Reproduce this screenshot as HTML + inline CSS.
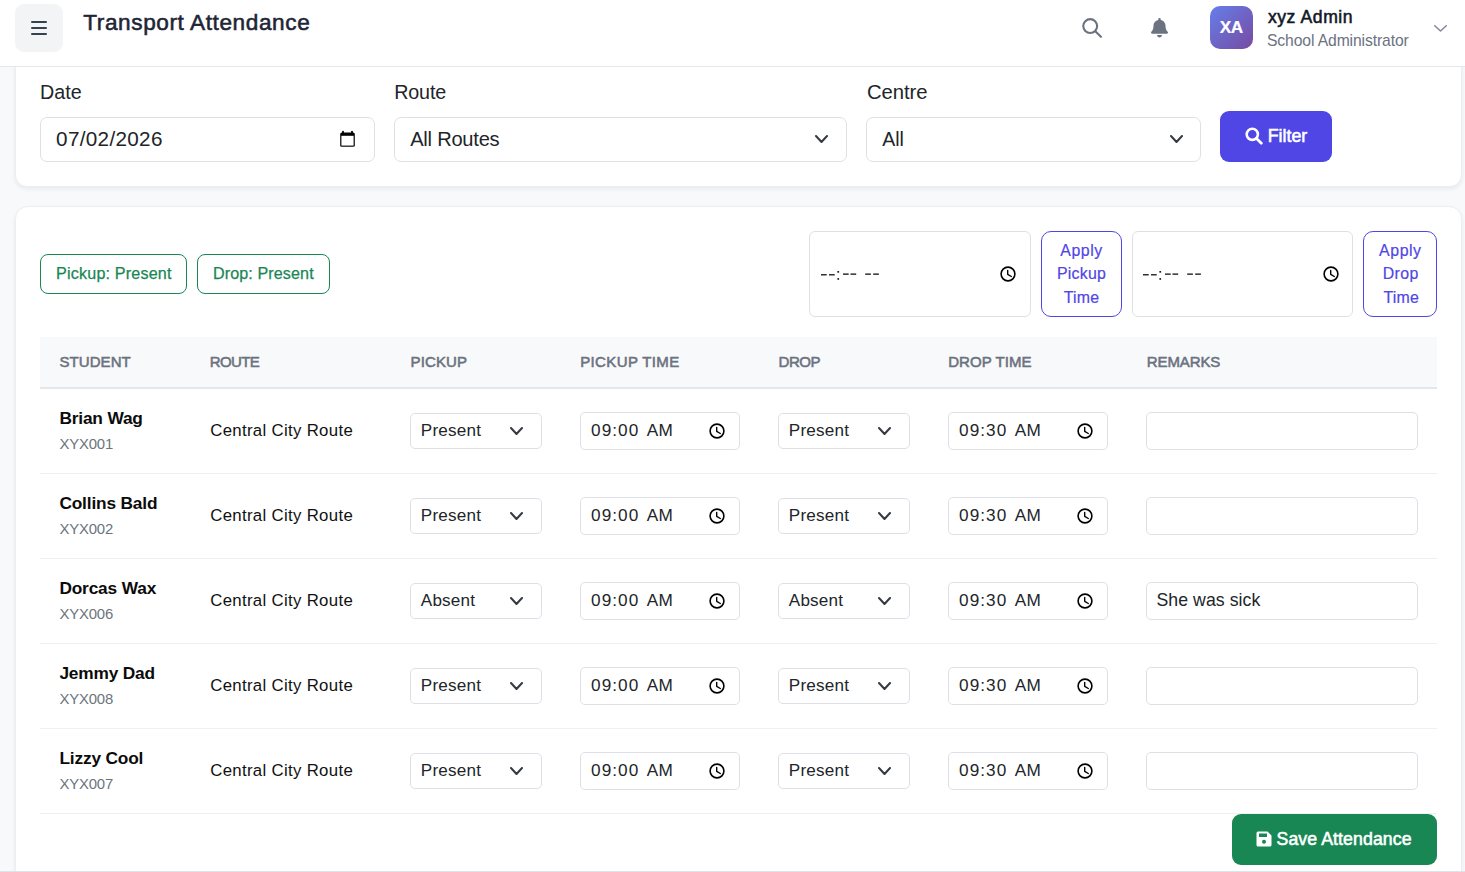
<!DOCTYPE html>
<html><head><meta charset="utf-8"><title>Transport Attendance</title>
<style>
html,body{margin:0;padding:0;}
body{width:1465px;height:872px;overflow:hidden;position:relative;background:#f8f9fb;font-family:"Liberation Sans",sans-serif;}
.t{position:absolute;white-space:nowrap;line-height:1;}
.b{position:absolute;box-sizing:border-box;}
</style></head><body>
<div class="b" style="left:15px;top:20px;width:1447px;height:167px;background:#fff;border:1px solid #eceef1;border-radius:12px;box-shadow:0 2px 4px rgba(20,30,50,0.07);"></div>
<div class="t" style="left:40.10px;top:83.20px;font-size:19.7px;color:#212529;font-weight:400;letter-spacing:-0.03px;">Date</div>
<div class="t" style="left:394.20px;top:83.20px;font-size:19.7px;color:#212529;font-weight:400;letter-spacing:-0.12px;">Route</div>
<div class="t" style="left:867.00px;top:82.20px;font-size:20.3px;color:#212529;font-weight:400;letter-spacing:-0.08px;">Centre</div>
<div class="b" style="left:40px;top:117px;width:335px;height:45px;background:#fff;border:1px solid #dde1e7;border-radius:7px;"></div>
<div class="b" style="left:394px;top:117px;width:453px;height:45px;background:#fff;border:1px solid #dde1e7;border-radius:7px;"></div>
<div class="b" style="left:866px;top:117px;width:335px;height:45px;background:#fff;border:1px solid #dde1e7;border-radius:7px;"></div>
<div class="t" style="left:56.10px;top:129.00px;font-size:20.7px;color:#212529;font-weight:400;letter-spacing:0.31px;">07/02/2026</div>
<div class="t" style="left:410.20px;top:129.00px;font-size:20.1px;color:#212529;font-weight:400;letter-spacing:-0.24px;">All Routes</div>
<div class="t" style="left:882.20px;top:130.00px;font-size:19.5px;color:#212529;font-weight:400;letter-spacing:0.0px;">All</div>
<svg class="b" style="left:340px;top:130px" width="15" height="17" viewBox="0 0 15 17"><rect x="0.2" y="2.4" width="14.6" height="14.4" rx="1.6" fill="#000"/><rect x="1.4" y="5.8" width="12.2" height="9.8" fill="#fff"/><rect x="2.1" y="0.7" width="1.8" height="3" rx="0.9" fill="#000"/><rect x="11.1" y="0.7" width="1.8" height="3" rx="0.9" fill="#000"/></svg>
<svg class="b" style="left:815px;top:135px" width="13" height="8" viewBox="0 0 13 8"><path d="M1.0 1.0 L6.5 7.0 L12.0 1.0" fill="none" stroke="#343a40" stroke-width="2" stroke-linecap="round" stroke-linejoin="round"/></svg>
<svg class="b" style="left:1170px;top:135px" width="13" height="8" viewBox="0 0 13 8"><path d="M1.0 1.0 L6.5 7.0 L12.0 1.0" fill="none" stroke="#343a40" stroke-width="2" stroke-linecap="round" stroke-linejoin="round"/></svg>
<div class="b" style="left:1220px;top:111px;width:112px;height:51px;background:#4f46e5;border-radius:9px;"></div>
<svg class="b" style="left:1245px;top:126.5px" width="18" height="18" viewBox="0 0 18 18"><circle cx="7.3" cy="7.3" r="5.6" fill="none" stroke="#fff" stroke-width="2.6"/><path d="M11.5 11.5 L16.3 16.3" stroke="#fff" stroke-width="2.8" stroke-linecap="round"/></svg>
<div class="t" style="left:1267.70px;top:128.10px;font-size:17.8px;color:#fff;font-weight:400;letter-spacing:0.0px;-webkit-text-stroke:0.55px #fff;">Filter</div>
<div class="b" style="left:15px;top:206px;width:1447px;height:694px;background:#fff;border:1px solid #eceef1;border-radius:13px;box-shadow:0 2px 4px rgba(20,30,50,0.07);"></div>
<div class="b" style="left:40px;top:254px;width:147px;height:40px;border:1px solid #198754;border-radius:8px;"></div>
<div class="b" style="left:197px;top:254px;width:133px;height:40px;border:1px solid #198754;border-radius:8px;"></div>
<div class="t" style="left:56.10px;top:264.80px;font-size:16.1px;color:#198754;font-weight:400;letter-spacing:0.19px;-webkit-text-stroke:0.25px #198754;">Pickup: Present</div>
<div class="t" style="left:213.00px;top:264.80px;font-size:16.1px;color:#198754;font-weight:400;letter-spacing:0.11px;-webkit-text-stroke:0.25px #198754;">Drop: Present</div>
<div class="b" style="left:809px;top:231px;width:222px;height:86px;background:#fff;border:1px solid #dde1e7;border-radius:6px;"></div>
<div class="b" style="left:1132px;top:231px;width:221px;height:86px;background:#fff;border:1px solid #dde1e7;border-radius:6px;"></div>
<svg class="b" style="left:819.8px;top:266px" width="62" height="16" viewBox="0 0 62 16"><rect x="1" y="8.0" width="5.7" height="1.5" fill="#303030"/><rect x="9" y="8.0" width="5.7" height="1.5" fill="#303030"/><rect x="23" y="7.4" width="5.7" height="1.5" fill="#303030"/><rect x="30.5" y="7.4" width="5.7" height="1.5" fill="#303030"/><rect x="45.2" y="7.4" width="5.7" height="1.5" fill="#303030"/><rect x="53.2" y="7.4" width="5.7" height="1.5" fill="#303030"/><rect x="17.4" y="5.0" width="1.7" height="1.7" fill="#1a1a1a"/><rect x="17.4" y="12.1" width="1.7" height="1.7" fill="#1a1a1a"/></svg>
<svg class="b" style="left:1142.3px;top:266px" width="62" height="16" viewBox="0 0 62 16"><rect x="1" y="8.0" width="5.7" height="1.5" fill="#303030"/><rect x="9" y="8.0" width="5.7" height="1.5" fill="#303030"/><rect x="23" y="7.4" width="5.7" height="1.5" fill="#303030"/><rect x="30.5" y="7.4" width="5.7" height="1.5" fill="#303030"/><rect x="45.2" y="7.4" width="5.7" height="1.5" fill="#303030"/><rect x="53.2" y="7.4" width="5.7" height="1.5" fill="#303030"/><rect x="17.4" y="5.0" width="1.7" height="1.7" fill="#1a1a1a"/><rect x="17.4" y="12.1" width="1.7" height="1.7" fill="#1a1a1a"/></svg>
<svg class="b" style="left:1000px;top:266px" width="16" height="16" viewBox="0 0 16 16"><circle cx="8" cy="8" r="6.9" fill="none" stroke="#000" stroke-width="1.6"/><path d="M7.7 4.4 V8.3 L11.3 10.5" fill="none" stroke="#000" stroke-width="1.4" stroke-linecap="round" stroke-linejoin="round"/></svg>
<svg class="b" style="left:1322.5px;top:266px" width="16" height="16" viewBox="0 0 16 16"><circle cx="8" cy="8" r="6.9" fill="none" stroke="#000" stroke-width="1.6"/><path d="M7.7 4.4 V8.3 L11.3 10.5" fill="none" stroke="#000" stroke-width="1.4" stroke-linecap="round" stroke-linejoin="round"/></svg>
<div class="b" style="left:1041px;top:231px;width:81px;height:86px;border:1px solid #4f46e5;border-radius:10px;"></div>
<div class="b" style="left:1363px;top:231px;width:74px;height:86px;border:1px solid #4f46e5;border-radius:10px;"></div>
<div class="t" style="left:1060.30px;top:242.90px;font-size:15.9px;color:#4f46e5;font-weight:400;letter-spacing:0.55px;-webkit-text-stroke:0.2px #4f46e5;">Apply</div>
<div class="t" style="left:1056.90px;top:265.90px;font-size:15.9px;color:#4f46e5;font-weight:400;letter-spacing:0.26px;-webkit-text-stroke:0.2px #4f46e5;">Pickup</div>
<div class="t" style="left:1063.70px;top:289.50px;font-size:15.9px;color:#4f46e5;font-weight:400;letter-spacing:0.23px;-webkit-text-stroke:0.2px #4f46e5;">Time</div>
<div class="t" style="left:1379.10px;top:242.90px;font-size:15.9px;color:#4f46e5;font-weight:400;letter-spacing:0.55px;-webkit-text-stroke:0.2px #4f46e5;">Apply</div>
<div class="t" style="left:1382.70px;top:265.90px;font-size:15.9px;color:#4f46e5;font-weight:400;letter-spacing:0.43px;-webkit-text-stroke:0.2px #4f46e5;">Drop</div>
<div class="t" style="left:1383.40px;top:289.50px;font-size:15.9px;color:#4f46e5;font-weight:400;letter-spacing:0.23px;-webkit-text-stroke:0.2px #4f46e5;">Time</div>
<div class="b" style="left:40px;top:337px;width:1397px;height:52px;background:#f8f9fa;border-bottom:2px solid #e3e6ea;"></div>
<div class="t" style="left:59.40px;top:353.90px;font-size:15.0px;color:#6b7280;font-weight:400;letter-spacing:0.08px;-webkit-text-stroke:0.55px #6b7280;">STUDENT</div>
<div class="t" style="left:209.70px;top:353.90px;font-size:15.0px;color:#6b7280;font-weight:400;letter-spacing:-0.58px;-webkit-text-stroke:0.55px #6b7280;">ROUTE</div>
<div class="t" style="left:410.60px;top:353.90px;font-size:15.0px;color:#6b7280;font-weight:400;letter-spacing:0.12px;-webkit-text-stroke:0.55px #6b7280;">PICKUP</div>
<div class="t" style="left:580.20px;top:353.90px;font-size:15.0px;color:#6b7280;font-weight:400;letter-spacing:0.37px;-webkit-text-stroke:0.55px #6b7280;">PICKUP TIME</div>
<div class="t" style="left:778.60px;top:353.90px;font-size:15.0px;color:#6b7280;font-weight:400;letter-spacing:-0.47px;-webkit-text-stroke:0.55px #6b7280;">DROP</div>
<div class="t" style="left:948.20px;top:353.90px;font-size:15.0px;color:#6b7280;font-weight:400;letter-spacing:0.06px;-webkit-text-stroke:0.55px #6b7280;">DROP TIME</div>
<div class="t" style="left:1146.80px;top:353.90px;font-size:15.0px;color:#6b7280;font-weight:400;letter-spacing:-0.1px;-webkit-text-stroke:0.55px #6b7280;">REMARKS</div>
<div class="b" style="left:40px;top:473px;width:1397px;height:1px;background:#eef0f3;"></div>
<div class="t" style="left:59.40px;top:409.90px;font-size:17.3px;color:#0b0b0b;font-weight:700;letter-spacing:-0.16px;">Brian Wag</div>
<div class="t" style="left:59.40px;top:437.00px;font-size:14.9px;color:#6c757d;font-weight:400;letter-spacing:-0.16px;">XYX001</div>
<div class="t" style="left:210.20px;top:422.50px;font-size:16.8px;color:#111;font-weight:400;letter-spacing:0.32px;">Central City Route</div>
<div class="b" style="left:410px;top:413px;width:132px;height:36px;background:#fff;border:1px solid #dde1e7;border-radius:5px;"></div>
<div class="t" style="left:420.80px;top:421.80px;font-size:17.1px;color:#212529;font-weight:400;letter-spacing:0.2px;">Present</div>
<svg class="b" style="left:510px;top:427px" width="13" height="8" viewBox="0 0 13 8"><path d="M1.0 1.0 L6.5 7.0 L12.0 1.0" fill="none" stroke="#343a40" stroke-width="2" stroke-linecap="round" stroke-linejoin="round"/></svg>
<div class="b" style="left:580px;top:412px;width:160px;height:38px;background:#fff;border:1px solid #dde1e7;border-radius:5px;"></div>
<div class="t" style="left:591.10px;top:421.90px;font-size:17.2px;color:#212529;font-weight:400;letter-spacing:1.03px;">09:00</div>
<div class="t" style="left:646.80px;top:421.90px;font-size:17.2px;color:#212529;font-weight:400;letter-spacing:0.2px;">AM</div>
<svg class="b" style="left:709px;top:423px" width="16" height="16" viewBox="0 0 16 16"><circle cx="8" cy="8" r="6.9" fill="none" stroke="#000" stroke-width="1.6"/><path d="M7.7 4.4 V8.3 L11.3 10.5" fill="none" stroke="#000" stroke-width="1.4" stroke-linecap="round" stroke-linejoin="round"/></svg>
<div class="b" style="left:778px;top:413px;width:132px;height:36px;background:#fff;border:1px solid #dde1e7;border-radius:5px;"></div>
<div class="t" style="left:788.80px;top:421.80px;font-size:17.1px;color:#212529;font-weight:400;letter-spacing:0.2px;">Present</div>
<svg class="b" style="left:878px;top:427px" width="13" height="8" viewBox="0 0 13 8"><path d="M1.0 1.0 L6.5 7.0 L12.0 1.0" fill="none" stroke="#343a40" stroke-width="2" stroke-linecap="round" stroke-linejoin="round"/></svg>
<div class="b" style="left:948px;top:412px;width:160px;height:38px;background:#fff;border:1px solid #dde1e7;border-radius:5px;"></div>
<div class="t" style="left:959.10px;top:421.90px;font-size:17.2px;color:#212529;font-weight:400;letter-spacing:1.03px;">09:30</div>
<div class="t" style="left:1014.80px;top:421.90px;font-size:17.2px;color:#212529;font-weight:400;letter-spacing:0.2px;">AM</div>
<svg class="b" style="left:1077px;top:423px" width="16" height="16" viewBox="0 0 16 16"><circle cx="8" cy="8" r="6.9" fill="none" stroke="#000" stroke-width="1.6"/><path d="M7.7 4.4 V8.3 L11.3 10.5" fill="none" stroke="#000" stroke-width="1.4" stroke-linecap="round" stroke-linejoin="round"/></svg>
<div class="b" style="left:1146px;top:412px;width:272px;height:38px;background:#fff;border:1px solid #dde1e7;border-radius:5px;"></div>
<div class="b" style="left:40px;top:558px;width:1397px;height:1px;background:#eef0f3;"></div>
<div class="t" style="left:59.40px;top:494.90px;font-size:17.3px;color:#0b0b0b;font-weight:700;letter-spacing:-0.16px;">Collins Bald</div>
<div class="t" style="left:59.40px;top:522.00px;font-size:14.9px;color:#6c757d;font-weight:400;letter-spacing:-0.16px;">XYX002</div>
<div class="t" style="left:210.20px;top:507.50px;font-size:16.8px;color:#111;font-weight:400;letter-spacing:0.32px;">Central City Route</div>
<div class="b" style="left:410px;top:498px;width:132px;height:36px;background:#fff;border:1px solid #dde1e7;border-radius:5px;"></div>
<div class="t" style="left:420.80px;top:506.80px;font-size:17.1px;color:#212529;font-weight:400;letter-spacing:0.2px;">Present</div>
<svg class="b" style="left:510px;top:512px" width="13" height="8" viewBox="0 0 13 8"><path d="M1.0 1.0 L6.5 7.0 L12.0 1.0" fill="none" stroke="#343a40" stroke-width="2" stroke-linecap="round" stroke-linejoin="round"/></svg>
<div class="b" style="left:580px;top:497px;width:160px;height:38px;background:#fff;border:1px solid #dde1e7;border-radius:5px;"></div>
<div class="t" style="left:591.10px;top:506.90px;font-size:17.2px;color:#212529;font-weight:400;letter-spacing:1.03px;">09:00</div>
<div class="t" style="left:646.80px;top:506.90px;font-size:17.2px;color:#212529;font-weight:400;letter-spacing:0.2px;">AM</div>
<svg class="b" style="left:709px;top:508px" width="16" height="16" viewBox="0 0 16 16"><circle cx="8" cy="8" r="6.9" fill="none" stroke="#000" stroke-width="1.6"/><path d="M7.7 4.4 V8.3 L11.3 10.5" fill="none" stroke="#000" stroke-width="1.4" stroke-linecap="round" stroke-linejoin="round"/></svg>
<div class="b" style="left:778px;top:498px;width:132px;height:36px;background:#fff;border:1px solid #dde1e7;border-radius:5px;"></div>
<div class="t" style="left:788.80px;top:506.80px;font-size:17.1px;color:#212529;font-weight:400;letter-spacing:0.2px;">Present</div>
<svg class="b" style="left:878px;top:512px" width="13" height="8" viewBox="0 0 13 8"><path d="M1.0 1.0 L6.5 7.0 L12.0 1.0" fill="none" stroke="#343a40" stroke-width="2" stroke-linecap="round" stroke-linejoin="round"/></svg>
<div class="b" style="left:948px;top:497px;width:160px;height:38px;background:#fff;border:1px solid #dde1e7;border-radius:5px;"></div>
<div class="t" style="left:959.10px;top:506.90px;font-size:17.2px;color:#212529;font-weight:400;letter-spacing:1.03px;">09:30</div>
<div class="t" style="left:1014.80px;top:506.90px;font-size:17.2px;color:#212529;font-weight:400;letter-spacing:0.2px;">AM</div>
<svg class="b" style="left:1077px;top:508px" width="16" height="16" viewBox="0 0 16 16"><circle cx="8" cy="8" r="6.9" fill="none" stroke="#000" stroke-width="1.6"/><path d="M7.7 4.4 V8.3 L11.3 10.5" fill="none" stroke="#000" stroke-width="1.4" stroke-linecap="round" stroke-linejoin="round"/></svg>
<div class="b" style="left:1146px;top:497px;width:272px;height:38px;background:#fff;border:1px solid #dde1e7;border-radius:5px;"></div>
<div class="b" style="left:40px;top:643px;width:1397px;height:1px;background:#eef0f3;"></div>
<div class="t" style="left:59.40px;top:579.90px;font-size:17.3px;color:#0b0b0b;font-weight:700;letter-spacing:-0.16px;">Dorcas Wax</div>
<div class="t" style="left:59.40px;top:607.00px;font-size:14.9px;color:#6c757d;font-weight:400;letter-spacing:-0.16px;">XYX006</div>
<div class="t" style="left:210.20px;top:592.50px;font-size:16.8px;color:#111;font-weight:400;letter-spacing:0.32px;">Central City Route</div>
<div class="b" style="left:410px;top:583px;width:132px;height:36px;background:#fff;border:1px solid #dde1e7;border-radius:5px;"></div>
<div class="t" style="left:420.80px;top:591.80px;font-size:17.1px;color:#212529;font-weight:400;letter-spacing:0.2px;">Absent</div>
<svg class="b" style="left:510px;top:597px" width="13" height="8" viewBox="0 0 13 8"><path d="M1.0 1.0 L6.5 7.0 L12.0 1.0" fill="none" stroke="#343a40" stroke-width="2" stroke-linecap="round" stroke-linejoin="round"/></svg>
<div class="b" style="left:580px;top:582px;width:160px;height:38px;background:#fff;border:1px solid #dde1e7;border-radius:5px;"></div>
<div class="t" style="left:591.10px;top:591.90px;font-size:17.2px;color:#212529;font-weight:400;letter-spacing:1.03px;">09:00</div>
<div class="t" style="left:646.80px;top:591.90px;font-size:17.2px;color:#212529;font-weight:400;letter-spacing:0.2px;">AM</div>
<svg class="b" style="left:709px;top:593px" width="16" height="16" viewBox="0 0 16 16"><circle cx="8" cy="8" r="6.9" fill="none" stroke="#000" stroke-width="1.6"/><path d="M7.7 4.4 V8.3 L11.3 10.5" fill="none" stroke="#000" stroke-width="1.4" stroke-linecap="round" stroke-linejoin="round"/></svg>
<div class="b" style="left:778px;top:583px;width:132px;height:36px;background:#fff;border:1px solid #dde1e7;border-radius:5px;"></div>
<div class="t" style="left:788.80px;top:591.80px;font-size:17.1px;color:#212529;font-weight:400;letter-spacing:0.2px;">Absent</div>
<svg class="b" style="left:878px;top:597px" width="13" height="8" viewBox="0 0 13 8"><path d="M1.0 1.0 L6.5 7.0 L12.0 1.0" fill="none" stroke="#343a40" stroke-width="2" stroke-linecap="round" stroke-linejoin="round"/></svg>
<div class="b" style="left:948px;top:582px;width:160px;height:38px;background:#fff;border:1px solid #dde1e7;border-radius:5px;"></div>
<div class="t" style="left:959.10px;top:591.90px;font-size:17.2px;color:#212529;font-weight:400;letter-spacing:1.03px;">09:30</div>
<div class="t" style="left:1014.80px;top:591.90px;font-size:17.2px;color:#212529;font-weight:400;letter-spacing:0.2px;">AM</div>
<svg class="b" style="left:1077px;top:593px" width="16" height="16" viewBox="0 0 16 16"><circle cx="8" cy="8" r="6.9" fill="none" stroke="#000" stroke-width="1.6"/><path d="M7.7 4.4 V8.3 L11.3 10.5" fill="none" stroke="#000" stroke-width="1.4" stroke-linecap="round" stroke-linejoin="round"/></svg>
<div class="b" style="left:1146px;top:582px;width:272px;height:38px;background:#fff;border:1px solid #dde1e7;border-radius:5px;"></div>
<div class="t" style="left:1156.50px;top:592.10px;font-size:17.7px;color:#212529;font-weight:400;letter-spacing:0.05px;">She was sick</div>
<div class="b" style="left:40px;top:728px;width:1397px;height:1px;background:#eef0f3;"></div>
<div class="t" style="left:59.40px;top:664.90px;font-size:17.3px;color:#0b0b0b;font-weight:700;letter-spacing:-0.16px;">Jemmy Dad</div>
<div class="t" style="left:59.40px;top:692.00px;font-size:14.9px;color:#6c757d;font-weight:400;letter-spacing:-0.16px;">XYX008</div>
<div class="t" style="left:210.20px;top:677.50px;font-size:16.8px;color:#111;font-weight:400;letter-spacing:0.32px;">Central City Route</div>
<div class="b" style="left:410px;top:668px;width:132px;height:36px;background:#fff;border:1px solid #dde1e7;border-radius:5px;"></div>
<div class="t" style="left:420.80px;top:676.80px;font-size:17.1px;color:#212529;font-weight:400;letter-spacing:0.2px;">Present</div>
<svg class="b" style="left:510px;top:682px" width="13" height="8" viewBox="0 0 13 8"><path d="M1.0 1.0 L6.5 7.0 L12.0 1.0" fill="none" stroke="#343a40" stroke-width="2" stroke-linecap="round" stroke-linejoin="round"/></svg>
<div class="b" style="left:580px;top:667px;width:160px;height:38px;background:#fff;border:1px solid #dde1e7;border-radius:5px;"></div>
<div class="t" style="left:591.10px;top:676.90px;font-size:17.2px;color:#212529;font-weight:400;letter-spacing:1.03px;">09:00</div>
<div class="t" style="left:646.80px;top:676.90px;font-size:17.2px;color:#212529;font-weight:400;letter-spacing:0.2px;">AM</div>
<svg class="b" style="left:709px;top:678px" width="16" height="16" viewBox="0 0 16 16"><circle cx="8" cy="8" r="6.9" fill="none" stroke="#000" stroke-width="1.6"/><path d="M7.7 4.4 V8.3 L11.3 10.5" fill="none" stroke="#000" stroke-width="1.4" stroke-linecap="round" stroke-linejoin="round"/></svg>
<div class="b" style="left:778px;top:668px;width:132px;height:36px;background:#fff;border:1px solid #dde1e7;border-radius:5px;"></div>
<div class="t" style="left:788.80px;top:676.80px;font-size:17.1px;color:#212529;font-weight:400;letter-spacing:0.2px;">Present</div>
<svg class="b" style="left:878px;top:682px" width="13" height="8" viewBox="0 0 13 8"><path d="M1.0 1.0 L6.5 7.0 L12.0 1.0" fill="none" stroke="#343a40" stroke-width="2" stroke-linecap="round" stroke-linejoin="round"/></svg>
<div class="b" style="left:948px;top:667px;width:160px;height:38px;background:#fff;border:1px solid #dde1e7;border-radius:5px;"></div>
<div class="t" style="left:959.10px;top:676.90px;font-size:17.2px;color:#212529;font-weight:400;letter-spacing:1.03px;">09:30</div>
<div class="t" style="left:1014.80px;top:676.90px;font-size:17.2px;color:#212529;font-weight:400;letter-spacing:0.2px;">AM</div>
<svg class="b" style="left:1077px;top:678px" width="16" height="16" viewBox="0 0 16 16"><circle cx="8" cy="8" r="6.9" fill="none" stroke="#000" stroke-width="1.6"/><path d="M7.7 4.4 V8.3 L11.3 10.5" fill="none" stroke="#000" stroke-width="1.4" stroke-linecap="round" stroke-linejoin="round"/></svg>
<div class="b" style="left:1146px;top:667px;width:272px;height:38px;background:#fff;border:1px solid #dde1e7;border-radius:5px;"></div>
<div class="b" style="left:40px;top:813px;width:1397px;height:1px;background:#eef0f3;"></div>
<div class="t" style="left:59.40px;top:749.90px;font-size:17.3px;color:#0b0b0b;font-weight:700;letter-spacing:-0.16px;">Lizzy Cool</div>
<div class="t" style="left:59.40px;top:777.00px;font-size:14.9px;color:#6c757d;font-weight:400;letter-spacing:-0.16px;">XYX007</div>
<div class="t" style="left:210.20px;top:762.50px;font-size:16.8px;color:#111;font-weight:400;letter-spacing:0.32px;">Central City Route</div>
<div class="b" style="left:410px;top:753px;width:132px;height:36px;background:#fff;border:1px solid #dde1e7;border-radius:5px;"></div>
<div class="t" style="left:420.80px;top:761.80px;font-size:17.1px;color:#212529;font-weight:400;letter-spacing:0.2px;">Present</div>
<svg class="b" style="left:510px;top:767px" width="13" height="8" viewBox="0 0 13 8"><path d="M1.0 1.0 L6.5 7.0 L12.0 1.0" fill="none" stroke="#343a40" stroke-width="2" stroke-linecap="round" stroke-linejoin="round"/></svg>
<div class="b" style="left:580px;top:752px;width:160px;height:38px;background:#fff;border:1px solid #dde1e7;border-radius:5px;"></div>
<div class="t" style="left:591.10px;top:761.90px;font-size:17.2px;color:#212529;font-weight:400;letter-spacing:1.03px;">09:00</div>
<div class="t" style="left:646.80px;top:761.90px;font-size:17.2px;color:#212529;font-weight:400;letter-spacing:0.2px;">AM</div>
<svg class="b" style="left:709px;top:763px" width="16" height="16" viewBox="0 0 16 16"><circle cx="8" cy="8" r="6.9" fill="none" stroke="#000" stroke-width="1.6"/><path d="M7.7 4.4 V8.3 L11.3 10.5" fill="none" stroke="#000" stroke-width="1.4" stroke-linecap="round" stroke-linejoin="round"/></svg>
<div class="b" style="left:778px;top:753px;width:132px;height:36px;background:#fff;border:1px solid #dde1e7;border-radius:5px;"></div>
<div class="t" style="left:788.80px;top:761.80px;font-size:17.1px;color:#212529;font-weight:400;letter-spacing:0.2px;">Present</div>
<svg class="b" style="left:878px;top:767px" width="13" height="8" viewBox="0 0 13 8"><path d="M1.0 1.0 L6.5 7.0 L12.0 1.0" fill="none" stroke="#343a40" stroke-width="2" stroke-linecap="round" stroke-linejoin="round"/></svg>
<div class="b" style="left:948px;top:752px;width:160px;height:38px;background:#fff;border:1px solid #dde1e7;border-radius:5px;"></div>
<div class="t" style="left:959.10px;top:761.90px;font-size:17.2px;color:#212529;font-weight:400;letter-spacing:1.03px;">09:30</div>
<div class="t" style="left:1014.80px;top:761.90px;font-size:17.2px;color:#212529;font-weight:400;letter-spacing:0.2px;">AM</div>
<svg class="b" style="left:1077px;top:763px" width="16" height="16" viewBox="0 0 16 16"><circle cx="8" cy="8" r="6.9" fill="none" stroke="#000" stroke-width="1.6"/><path d="M7.7 4.4 V8.3 L11.3 10.5" fill="none" stroke="#000" stroke-width="1.4" stroke-linecap="round" stroke-linejoin="round"/></svg>
<div class="b" style="left:1146px;top:752px;width:272px;height:38px;background:#fff;border:1px solid #dde1e7;border-radius:5px;"></div>
<div class="b" style="left:1232px;top:814px;width:205px;height:51px;background:#198754;border-radius:9px;"></div>
<svg class="b" style="left:1256px;top:830.5px" width="16" height="16" viewBox="0 0 16 16"><path d="M2 0.5 H11.5 L15.5 4.5 V14 A1.5 1.5 0 0 1 14 15.5 H2 A1.5 1.5 0 0 1 0.5 14 V2 A1.5 1.5 0 0 1 2 0.5 Z" fill="#fff"/><rect x="3" y="2.5" width="8" height="3.5" fill="#198754"/><circle cx="8" cy="10.8" r="2" fill="#198754"/></svg>
<div class="t" style="left:1276.50px;top:831.20px;font-size:17.7px;color:#fff;font-weight:400;letter-spacing:0.09px;-webkit-text-stroke:0.55px #fff;">Save Attendance</div>
<div class="b" style="left:0px;top:871px;width:1465px;height:1px;background:#dde3ea;"></div>
<div class="b" style="left:0px;top:0px;width:1465px;height:67px;background:#fff;border-bottom:1px solid #e5e7eb;"></div>
<div class="b" style="left:15px;top:4px;width:48px;height:48px;background:#f3f4f6;border-radius:9px;"></div>
<div class="b" style="left:30.5px;top:21px;width:16.5px;height:2px;background:#374151;border-radius:1px;"></div>
<div class="b" style="left:30.5px;top:27px;width:16.5px;height:2px;background:#374151;border-radius:1px;"></div>
<div class="b" style="left:30.5px;top:33px;width:16.5px;height:2px;background:#374151;border-radius:1px;"></div>
<div class="t" style="left:83.30px;top:11.80px;font-size:22.6px;color:#1e2535;font-weight:400;letter-spacing:0.59px;-webkit-text-stroke:0.55px #1e2535;">Transport Attendance</div>
<svg class="b" style="left:1082px;top:17px" width="21" height="21" viewBox="0 0 21 21"><circle cx="8.2" cy="9.1" r="6.95" fill="none" stroke="#6b7280" stroke-width="2.1"/><path d="M13.3 14.2 L18.9 19.8" stroke="#6b7280" stroke-width="2.1" stroke-linecap="round"/></svg>
<svg class="b" style="left:1151px;top:18px" width="17" height="19.5" viewBox="0 0 448 512" preserveAspectRatio="none"><path fill="#6b7280" d="M224 0c-17.7 0-32 14.3-32 32V51.2C119 66 64 130.6 64 208v18.8c0 47-17.3 92.4-48.5 127.6l-7.4 8.3c-8.4 9.4-10.4 22.9-5.3 34.4S19.4 416 32 416H416c12.6 0 24-7.4 29.2-18.9s3.1-25-5.3-34.4l-7.4-8.3C401.3 319.2 384 273.9 384 226.8V208c0-77.4-55-142-128-156.8V32c0-17.7-14.3-32-32-32zm45.3 493.3c12-12 18.7-28.3 18.7-45.3H224 160c0 17 6.7 33.3 18.7 45.3s28.3 18.7 45.3 18.7s33.3-6.7 45.3-18.7z"/></svg>
<div class="b" style="left:1210px;top:6px;width:43px;height:43px;background:linear-gradient(135deg,#667eea 0%,#764ba2 100%);border-radius:10px;"></div>
<div class="t" style="left:1219.80px;top:18.80px;font-size:17.2px;color:#fff;font-weight:700;letter-spacing:-0.4px;-webkit-text-stroke:0.2px #fff;">XA</div>
<div class="t" style="left:1267.90px;top:8.90px;font-size:17.6px;color:#111827;font-weight:400;letter-spacing:0.57px;-webkit-text-stroke:0.55px #111827;">xyz Admin</div>
<div class="t" style="left:1267.00px;top:32.90px;font-size:15.7px;color:#6b7280;font-weight:400;letter-spacing:-0.11px;">School Administrator</div>
<svg class="b" style="left:1434px;top:24.9px" width="13" height="6.8" viewBox="0 0 13 6.8"><path d="M0.75 0.75 L6.5 6.05 L12.25 0.75" fill="none" stroke="#808896" stroke-width="1.5" stroke-linecap="round" stroke-linejoin="round"/></svg>
</body></html>
